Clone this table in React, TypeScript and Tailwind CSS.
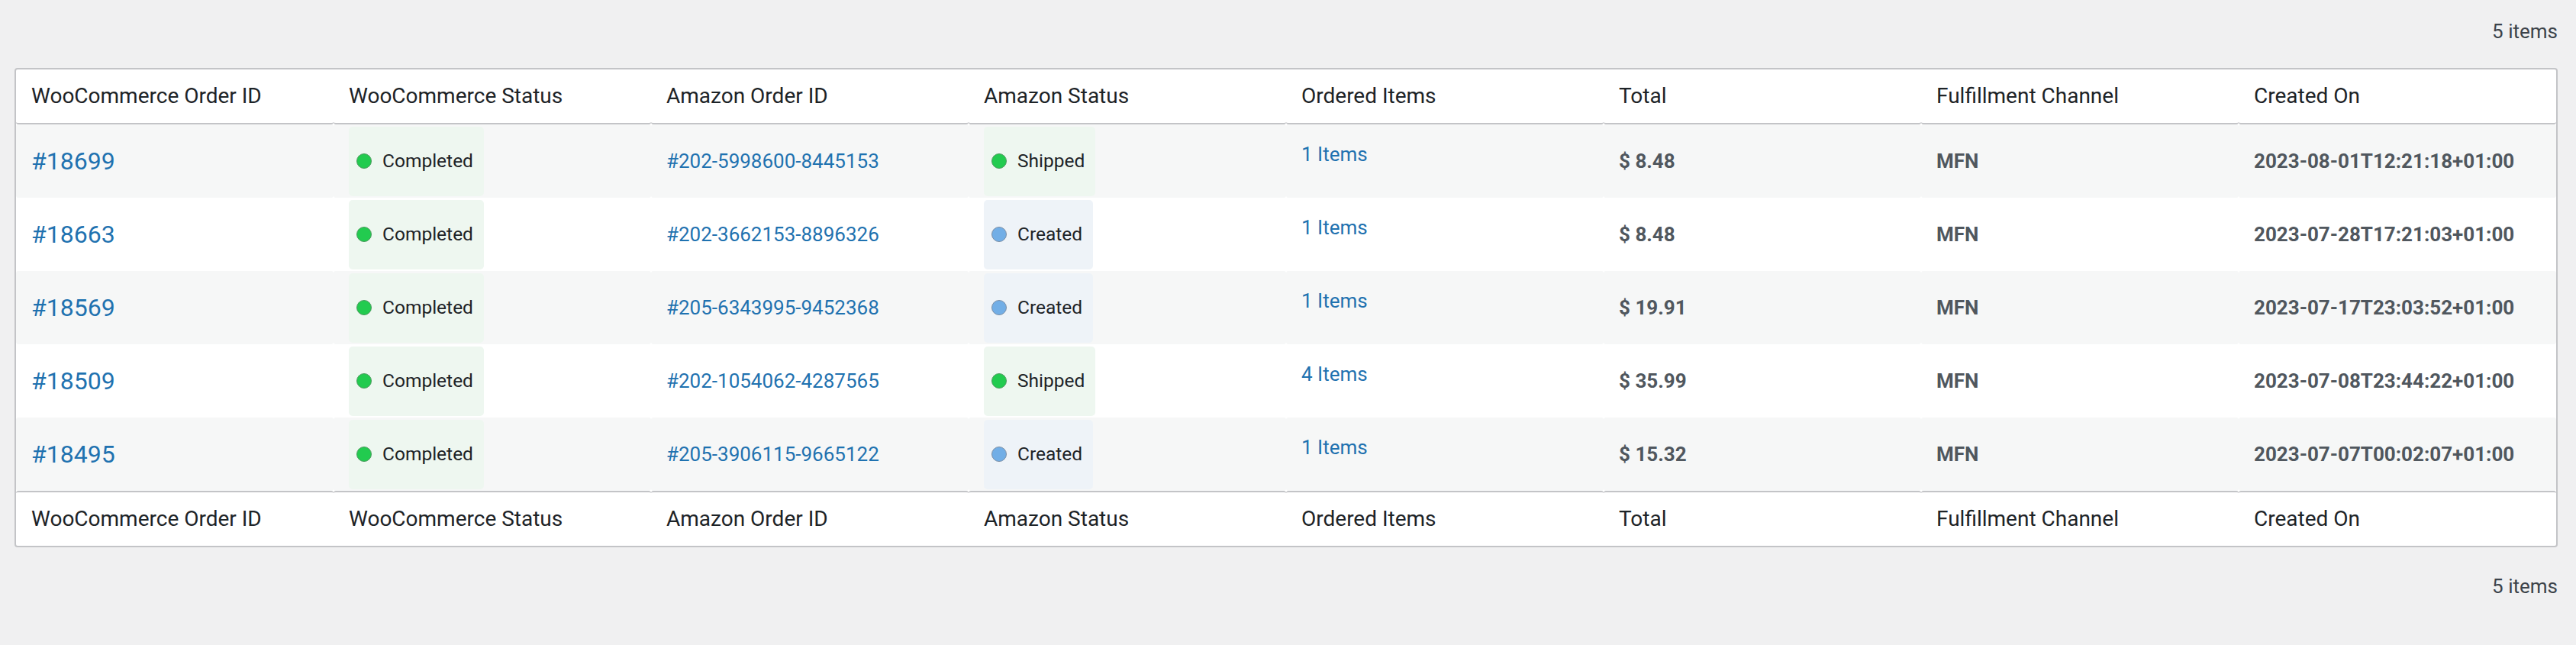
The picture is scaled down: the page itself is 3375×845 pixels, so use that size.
const COLUMNS = [
  'WooCommerce Order ID',
  'WooCommerce Status',
  'Amazon Order ID',
  'Amazon Status',
  'Ordered Items',
  'Total',
  'Fulfillment Channel',
  'Created On',
];

type AmazonStatus = 'Shipped' | 'Created';

interface Order {
  id: string;
  amazonId: string;
  amazonStatus: AmazonStatus;
  items: number;
  total: string;
  channel: string;
  createdOn: string;
}

const ORDERS: Order[] = [
  {
    id: '#18699',
    amazonId: '#202-5998600-8445153',
    amazonStatus: 'Shipped',
    items: 1,
    total: '8.48',
    channel: 'MFN',
    createdOn: '2023-08-01T12:21:18+01:00',
  },
  {
    id: '#18663',
    amazonId: '#202-3662153-8896326',
    amazonStatus: 'Created',
    items: 1,
    total: '8.48',
    channel: 'MFN',
    createdOn: '2023-07-28T17:21:03+01:00',
  },
  {
    id: '#18569',
    amazonId: '#205-6343995-9452368',
    amazonStatus: 'Created',
    items: 1,
    total: '19.91',
    channel: 'MFN',
    createdOn: '2023-07-17T23:03:52+01:00',
  },
  {
    id: '#18509',
    amazonId: '#202-1054062-4287565',
    amazonStatus: 'Shipped',
    items: 4,
    total: '35.99',
    channel: 'MFN',
    createdOn: '2023-07-08T23:44:22+01:00',
  },
  {
    id: '#18495',
    amazonId: '#205-3906115-9665122',
    amazonStatus: 'Created',
    items: 1,
    total: '15.32',
    channel: 'MFN',
    createdOn: '2023-07-07T00:02:07+01:00',
  },
];

const BADGE_STYLES = {
  green: {
    bg: 'bg-[#eef7f0]',
    dot: 'bg-[#22cb4f] border-[#4c9a5e]',
  },
  blue: {
    bg: 'bg-[#eef3f8]',
    dot: 'bg-[#72aee6] border-[#7c8fa6]',
  },
};

interface StatusBadgeProps {
  label: string;
  tone: keyof typeof BADGE_STYLES;
}

const StatusBadge = ({ label, tone }: StatusBadgeProps) => {
  const styles = BADGE_STYLES[tone];
  return (
    <div
      className={`flex items-center h-[91px] pl-[10px] pr-[14px] gap-[14px] rounded-[5px] ${styles.bg}`}
    >
      <span className={`w-[20px] h-[20px] rounded-full border-[1.5px] shrink-0 ${styles.dot}`} />
      <span className="text-[24.5px] leading-none text-[#1d2327]">{label}</span>
    </div>
  );
};

const ItemCount = ({ position }: { position: 'top' | 'bottom' }) => (
  <div
    className={`flex justify-end pr-[24px] ${position === 'top' ? 'pt-[23px] pb-[30px]' : 'pt-[33px]'}`}
  >
    <span className="text-[26px] leading-[36px] text-[#3c434a]">5 items</span>
  </div>
);

const HeaderRow = ({ position }: { position: 'top' | 'bottom' }) => (
  <div className="grid grid-cols-8">
    {COLUMNS.map((col) => (
      <div
        key={col}
        className={`flex items-center h-[72px] pl-[20px] rounded-[3px] border-[#c3c4c7] ${
          position === 'top' ? 'border-b-2' : 'border-t-2'
        } text-[28px] text-[#1d2327]`}
      >
        {col}
      </div>
    ))}
  </div>
);

const OrderRow = ({ order, striped }: { order: Order; striped: boolean }) => {
  const cell = `flex items-center h-[96px] pl-[20px] rounded-[3px] ${striped ? 'bg-[#f6f7f7]' : 'bg-white'}`;
  return (
    <div className="grid grid-cols-8">
      <div className={cell}>
        <span className="text-[32px] text-[#1f72b0]">{order.id}</span>
      </div>
      <div className={cell}>
        <StatusBadge label="Completed" tone="green" />
      </div>
      <div className={cell}>
        <span className="text-[26px] text-[#1f72b0]">{order.amazonId}</span>
      </div>
      <div className={cell}>
        <StatusBadge label={order.amazonStatus} tone={order.amazonStatus === 'Shipped' ? 'green' : 'blue'} />
      </div>
      <div className={cell}>
        <span className="text-[26px] text-[#1f72b0] pb-[17px]">{order.items} Items</span>
      </div>
      <div className={cell}>
        <span className="text-[26px] font-bold text-[#50575e]">$ {order.total}</span>
      </div>
      <div className={cell}>
        <span className="text-[26px] font-bold text-[#50575e]">{order.channel}</span>
      </div>
      <div className={cell}>
        <span className="text-[26px] font-bold text-[#50575e]">{order.createdOn}</span>
      </div>
    </div>
  );
};

export default function App() {
  return (
    <div className="min-h-[845px] bg-[#f0f0f1] font-[Roboto,sans-serif]">
      <ItemCount position="top" />
      <div className="ml-[19px] mr-[24px] border-2 border-[#c3c4c7] rounded-[4px] bg-white overflow-hidden">
        <HeaderRow position="top" />
        {ORDERS.map((order, i) => (
          <OrderRow key={order.id} order={order} striped={i % 2 === 0} />
        ))}
        <HeaderRow position="bottom" />
      </div>
      <ItemCount position="bottom" />
    </div>
  );
}
